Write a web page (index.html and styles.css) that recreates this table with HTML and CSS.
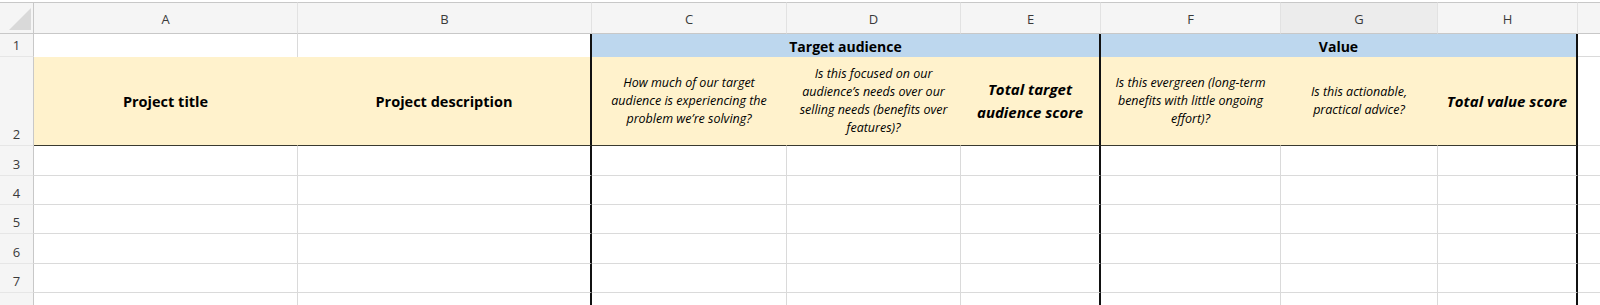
FILE: index.html
```html
<!DOCTYPE html>
<html>
<head>
<meta charset="utf-8">
<link rel="stylesheet" href="styles.css">
</head>
<body>
<div class="sheet">
  <div class="grid">
    <!-- column header row -->
    <div class="ch corner"><svg class="tri" width="24" height="24" viewBox="0 0 24 24"><polygon points="23,1 23,23 1,23" fill="#d9d9d9"/></svg></div>
    <div class="ch">A</div>
    <div class="ch">B</div>
    <div class="ch">C</div>
    <div class="ch">D</div>
    <div class="ch">E</div>
    <div class="ch">F</div>
    <div class="ch sel">G</div>
    <div class="ch">H</div>
    <div class="ch"></div>

    <!-- row 1 -->
    <div class="rh">1</div>
    <div class="c r1"></div>
    <div class="c r1 bk"></div>
    <div class="c grp span3 bk">Target audience</div>
    <div class="c grp span3 bk">Value</div>
    <div class="c"></div>

    <!-- row 2 -->
    <div class="rh">2</div>
    <div class="c hd"><span class="b">Project title</span></div>
    <div class="c hd bk"><span class="b">Project description</span></div>
    <div class="c hd"><span class="q">How much of our target<br>audience is experiencing the<br>problem we’re solving?</span></div>
    <div class="c hd"><span class="q">Is this focused on our<br>audience’s needs over our<br>selling needs (benefits over<br>features)?</span></div>
    <div class="c hd bk"><span class="bi">Total target<br>audience score</span></div>
    <div class="c hd"><span class="q">Is this evergreen (long-term<br>benefits with little ongoing<br>effort)?</span></div>
    <div class="c hd"><span class="q">Is this actionable,<br>practical advice?</span></div>
    <div class="c hd bk"><span class="bi">Total value score</span></div>
    <div class="c"></div>

    <!-- rows 3-8 -->
    <div class="rh">3</div>
    <div class="c"></div><div class="c bk"></div><div class="c"></div><div class="c"></div><div class="c bk"></div><div class="c"></div><div class="c"></div><div class="c bk"></div><div class="c"></div>
    <div class="rh">4</div>
    <div class="c"></div><div class="c bk"></div><div class="c"></div><div class="c"></div><div class="c bk"></div><div class="c"></div><div class="c"></div><div class="c bk"></div><div class="c"></div>
    <div class="rh">5</div>
    <div class="c"></div><div class="c bk"></div><div class="c"></div><div class="c"></div><div class="c bk"></div><div class="c"></div><div class="c"></div><div class="c bk"></div><div class="c"></div>
    <div class="rh">6</div>
    <div class="c"></div><div class="c bk"></div><div class="c"></div><div class="c"></div><div class="c bk"></div><div class="c"></div><div class="c"></div><div class="c bk"></div><div class="c"></div>
    <div class="rh">7</div>
    <div class="c"></div><div class="c bk"></div><div class="c"></div><div class="c"></div><div class="c bk"></div><div class="c"></div><div class="c"></div><div class="c bk"></div><div class="c"></div>
    <div class="rh"></div>
    <div class="c"></div><div class="c bk"></div><div class="c"></div><div class="c"></div><div class="c bk"></div><div class="c"></div><div class="c"></div><div class="c bk"></div><div class="c"></div>
  </div>
</div>
</body>
</html>
```

FILE: styles.css
```css
html, body {
  margin: 0;
  padding: 0;
  background: #ffffff;
  overflow: hidden;
}
.sheet {
  width: 1600px;
  height: 305px;
  overflow: hidden;
  padding-top: 2px;
  box-sizing: border-box;
  font-family: "Open Sans", "Liberation Sans", sans-serif;
}
.grid {
  display: grid;
  grid-template-columns: 34px 264px 294px 195px 174px 140px 180px 157px 140px 100px;
  grid-template-rows: 32px 23px 89px 30px 29px 29px 30px 29px 29px;
}
.grid > div {
  box-sizing: border-box;
}
.ch {
  background: #f5f5f5;
  border-top: 1px solid #c8c8c8;
  border-bottom: 1px solid #c8c8c8;
  border-right: 1px solid #e2e2e2;
  display: flex;
  align-items: center;
  justify-content: center;
  font-size: 13px;
  color: #3a3a3a;
  padding-top: 1px;
}
.ch.sel {
  background: #ececec;
}
.corner {
  border-right: 1px solid #c8c8c8;
  justify-content: flex-end;
  align-items: flex-end;
  padding: 0 1px 2px 0;
}
.tri {
  display: block;
}
.rh {
  background: #f5f5f5;
  border-right: 1px solid #c8c8c8;
  border-bottom: 1px solid #e6e6e6;
  display: flex;
  align-items: flex-end;
  justify-content: center;
  padding-bottom: 3px;
  font-size: 13px;
  color: #3a3a3a;
  line-height: 16px;
}
.c {
  border-right: 1px solid #dadada;
  border-bottom: 1px solid #dadada;
  background: #fff;
}
.c.bk {
  border-right: 2px solid #111;
}
.c.r1 {
  border-bottom: none;
}
.span3 {
  grid-column: span 3;
}
.grp {
  background: #bdd7ee;
  border-bottom: none;
  display: flex;
  align-items: center;
  justify-content: center;
  font-weight: 700;
  font-size: 14px;
  color: #000;
  padding-top: 1px;
}
.hd {
  background: #fff2cc;
  border-right-color: #fff2cc;
  border-bottom: 1px solid #3a3a30;
  display: flex;
  align-items: center;
  justify-content: center;
  text-align: center;
  color: #000;
}
.hd.bk {
  border-right: 2px solid #111;
}
.b {
  font-weight: 700;
  font-size: 14.5px;
}
.q {
  font-style: italic;
  font-size: 12.5px;
  line-height: 18px;
  white-space: nowrap;
}
.bi {
  font-style: italic;
  font-weight: 700;
  font-size: 15px;
  line-height: 23px;
  white-space: nowrap;
}
```
